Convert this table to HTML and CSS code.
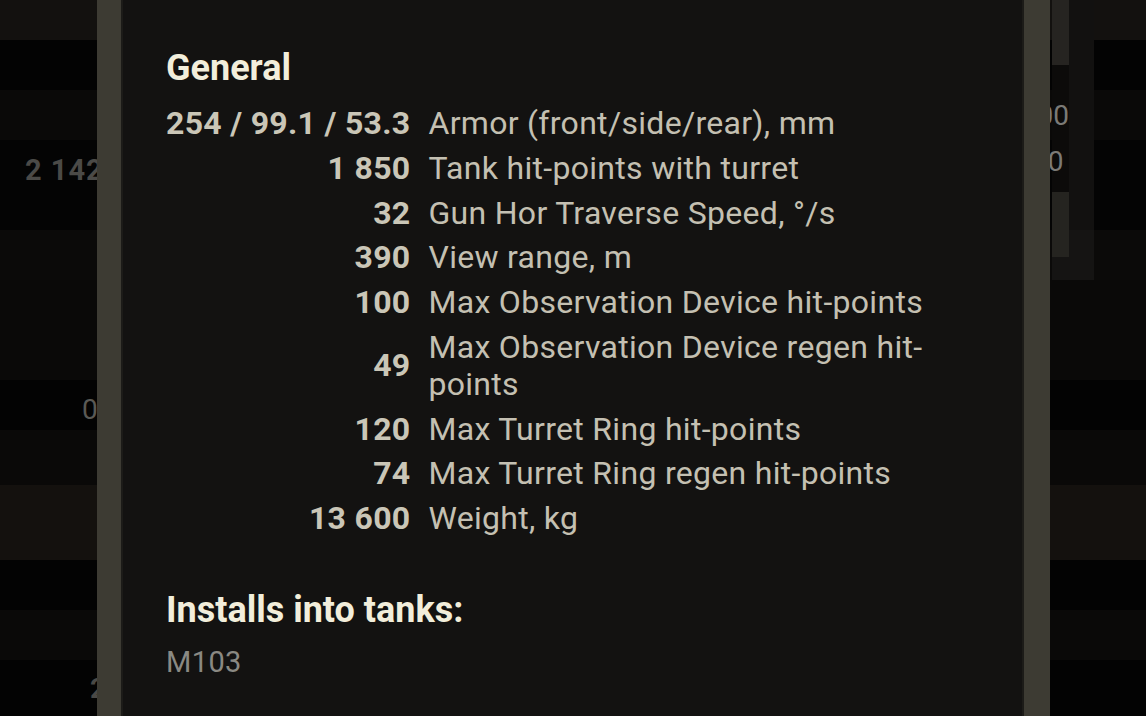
FILE: index.html
```html
<!DOCTYPE html>
<html lang="en">
<head>
<meta charset="utf-8">
<title>Module details</title>
<link rel="stylesheet" href="styles.css">
</head>
<body>
<div class="screen">
  <div class="list">
    <div class="band b1"><span class="cell-l"></span><span class="side box-a"></span><span class="side2 col-a"></span></div>
    <div class="band b2"><span class="cell-l"></span><span class="side box-b"></span><span class="side2 col-a"></span></div>
    <div class="band b3"><span class="cell-l"></span><span class="side num-r">00</span><span class="side2 col-a"></span></div>
    <div class="band b4"><span class="cell-l num-l">2 142</span><span class="side num-r top">00<span class="box-c"></span></span><span class="side2 col-a"></span></div>
    <div class="band b5"><span class="cell-l"></span><span class="side box-d"></span><span class="side2 col-b"></span></div>
    <div class="band b6"></div>
    <div class="band b7"><span class="cell-l num-zero">0</span></div>
    <div class="band b8"></div>
    <div class="band b9"></div>
    <div class="band b10"></div>
    <div class="band b11"></div>
    <div class="band b12"><span class="cell-l num-two">2</span></div>
  </div>

  <div class="dialog">
    <div class="dialog-body">
      <h2 class="section-title">General</h2>
      <div class="stats">
        <div class="val">254 / 99.1 / 53.3</div><div class="lbl">Armor (front/side/rear), mm</div>
        <div class="val">1 850</div><div class="lbl">Tank hit-points with turret</div>
        <div class="val">32</div><div class="lbl">Gun Hor Traverse Speed, °/s</div>
        <div class="val">390</div><div class="lbl">View range, m</div>
        <div class="val">100</div><div class="lbl">Max Observation Device hit-points</div>
        <div class="val">49</div><div class="lbl">Max Observation Device regen hit-points</div>
        <div class="val">120</div><div class="lbl">Max Turret Ring hit-points</div>
        <div class="val">74</div><div class="lbl">Max Turret Ring regen hit-points</div>
        <div class="val">13 600</div><div class="lbl">Weight, kg</div>
      </div>
      <h2 class="section-title second">Installs into tanks:</h2>
      <div class="tank">M103</div>
    </div>
  </div>
</div>
</body>
</html>
```

FILE: styles.css
```css
html, body {
  margin: 0;
  padding: 0;
  background: #050505;
}

body {
  font-family: Roboto, "Liberation Sans", sans-serif;
  width: 1146px;
  height: 716px;
  overflow: hidden;
}

.screen {
  position: relative;
  width: 1146px;
  height: 716px;
  overflow: hidden;
}

/* background list */
.list {
  display: flex;
  flex-direction: column;
  width: 1146px;
  height: 716px;
}

.band {
  display: flex;
  align-items: stretch;
  width: 100%;
}

.b1 { height: 40px; background: #13110f; }
.b2 { height: 50px; background: #030303; }
.b3 { height: 50px; background: #0a0908; }
.b4 { height: 90px; background: #040404; }
.b5 { height: 50px; background: #0b0a09; }
.b6 { height: 100px; background: #0a0908; }
.b7 { height: 50px; background: #030303; }
.b8 { height: 55px; background: #0a0908; }
.b9 { height: 75px; background: #14110e; }
.b10 { height: 50px; background: #030303; }
.b11 { height: 50px; background: #0a0908; }
.b12 { height: 56px; background: #030303; }

.cell-l {
  width: 1052px;
  flex: none;
  display: flex;
  align-items: center;
  font-size: 28px;
  color: #4a4946;
  box-sizing: border-box;
}

.num-l {
  align-items: flex-start;
  padding-top: 13px;
  padding-left: 25px;
  font-size: 29px;
  font-weight: 700;
  letter-spacing: 1px;
  color: #4b4a47;
}

.num-zero {
  padding-left: 82px;
  padding-top: 8px;
  color: #5a5955;
}

.num-two {
  padding-left: 90px;
  font-weight: 700;
  color: #4a4946;
}

.side {
  width: 17px;
  flex: none;
  display: flex;
  align-items: center;
  justify-content: flex-end;
  font-size: 28px;
  color: #7b7a76;
  background: #0c0b0a;
}

.side2 {
  width: 25px;
  flex: none;
}

.col-a { background: #121110; }
.col-b { background: #151413; }

.box-a { background: #262421; }
.box-b { background: linear-gradient(#262421 0 25px, #0c0b0a 25px); }
.num-r {
  justify-content: flex-end;
  margin-left: -20px;
  width: 37px;
  background: linear-gradient(90deg, transparent 20px, #0c0b0a 20px);
}
.num-r.top {
  align-items: flex-start;
  flex-direction: column;
  justify-content: flex-start;
  padding-top: 5px;
  box-sizing: border-box;
}
.num-r.top .box-c {
  display: block;
  width: 17px;
  height: 45px;
  margin-top: 14px;
  margin-left: 20px;
  background: #252420;
}
.box-d { background: linear-gradient(#252420 0 27px, #151413 27px); }

/* dialog overlay */
.dialog {
  position: absolute;
  top: 0;
  left: 97px;
  width: 953px;
  height: 716px;
  box-sizing: border-box;
  border-left: 24px solid #3d3b33;
  border-right: 26px solid #3d3b33;
  background: #131211;
  box-shadow: inset 2px 0 0 #1c1b18, inset -2px 0 0 #1c1b18;
}

.dialog-body {
  padding: 46px 45px 0 45px;
}

.section-title {
  margin: 0;
  font-size: 36px;
  line-height: 44px;
  font-weight: 700;
  color: #f2eedb;
}

.section-title.second {
  margin-top: 51px;
}

.stats {
  margin-top: 15px;
  display: grid;
  grid-template-columns: max-content 1fr;
  column-gap: 18px;
  row-gap: 7.75px;
  font-size: 32px;
  line-height: 37px;
  letter-spacing: 0.3px;
}

.val {
  text-align: right;
  align-self: center;
  font-weight: 700;
  color: #cac6b7;
}

.lbl {
  color: #c4c0b2;
}

.tank {
  margin-top: 13px;
  font-size: 29px;
  line-height: 34px;
  letter-spacing: 0.4px;
  color: #8a8983;
}
```
